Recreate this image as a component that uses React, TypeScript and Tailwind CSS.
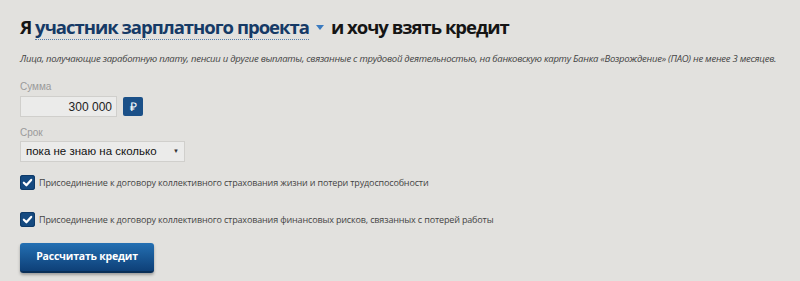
import { useState } from 'react'

function Check({ checked, onToggle, label }: { checked: boolean; onToggle: () => void; label: string }) {
  return (
    <label className="flex h-[15px] items-center gap-[4px] cursor-pointer" onClick={onToggle}>
      <span className="flex h-[15px] w-[15px] shrink-0 items-center justify-center rounded-[3px] bg-[#154a80] shadow-[inset_0_0_0_1px_#0e3a68]">
        {checked && (
          <svg width="11" height="11" viewBox="0 0 12 12">
            <path d="M2 6.2 L4.8 9 L10 3.2" fill="none" stroke="#fff" strokeWidth="2.4" strokeLinecap="round" strokeLinejoin="round" />
          </svg>
        )}
      </span>
      <span className="whitespace-nowrap text-[9px] tracking-[-0.15px] text-[#444]">{label}</span>
    </label>
  )
}

export default function App() {
  const [life, setLife] = useState(true)
  const [job, setJob] = useState(true)

  return (
    <div className="h-[281px] w-[800px] overflow-hidden bg-[#e2e1de] px-[20px] pt-[12px] font-['Open_Sans',sans-serif] text-[#222]">
      {/* Heading */}
      <h1 className="flex h-[30px] items-baseline whitespace-nowrap text-[18.5px] font-bold leading-[30px] tracking-[-1px] text-[#151515]">
        <span>Я&nbsp;</span>
        <span className="border-b border-dotted border-[#5a7fa8] leading-[24px] text-[#163a66]">участник зарплатного проекта</span>
        <span className="mx-[7px] inline-block h-0 w-0 -translate-y-[4px] border-x-[4.5px] border-t-[5px] border-x-transparent border-t-[#3b7bc0]"></span>
        <span>и хочу взять кредит</span>
      </h1>

      <p className="mt-[10px] whitespace-nowrap text-[9.5px] italic leading-[13px] tracking-[-0.25px] text-[#444]">
        Лица, получающие заработную плату, пенсии и другие выплаты, связанные с трудовой деятельностью, на банковскую карту Банка «Возрождение» (ПАО) не менее 3 месяцев.
      </p>

      {/* Sum */}
      <div className="mt-[16px] font-['Liberation_Sans',sans-serif]">
        <div className="text-[10px] leading-[12px] text-[#9a9a9a]">Сумма</div>
        <div className="mt-[3px] flex items-center gap-[6px]">
          <input
            defaultValue="300 000"
            className="h-[21px] w-[97px] border border-[#d0cfcc] bg-[#ebebea] px-[4px] text-right text-[12px] text-[#222] outline-none"
          />
          <span className="flex h-[19px] w-[20px] items-center justify-center rounded-[2px] bg-[#1b5088] text-[12px] text-white">₽</span>
        </div>
      </div>

      {/* Term */}
      <div className="mt-[10px] font-['Liberation_Sans',sans-serif]">
        <div className="text-[10px] leading-[12px] text-[#9a9a9a]">Срок</div>
        <div className="mt-[2px] flex h-[21px] w-[165px] items-center justify-between border border-[#d0cfcc] bg-[#ebebea] pl-[5px] pr-[5px]">
          <span className="whitespace-nowrap text-[11.5px] text-[#111]">пока не знаю на сколько</span>
          <span className="text-[6px] text-[#333]">▼</span>
        </div>
      </div>

      {/* Options */}
      <div className="mt-[13px] flex flex-col gap-[22px]">
        <Check checked={life} onToggle={() => setLife(!life)} label="Присоединение к договору коллективного страхования жизни и потери трудоспособности" />
        <Check checked={job} onToggle={() => setJob(!job)} label="Присоединение к договору коллективного страхования финансовых рисков, связанных с потерей работы" />
      </div>

      <button className="mt-[16px] h-[30px] w-[134px] rounded-[3px] border-b-[2px] border-[#0a2f57] bg-gradient-to-b from-[#2470b3] to-[#0e4078] text-[10.5px] font-bold tracking-[-0.2px] text-white shadow-[0_2px_3px_rgba(0,0,0,0.3)]">
        Рассчитать кредит
      </button>
    </div>
  )
}
